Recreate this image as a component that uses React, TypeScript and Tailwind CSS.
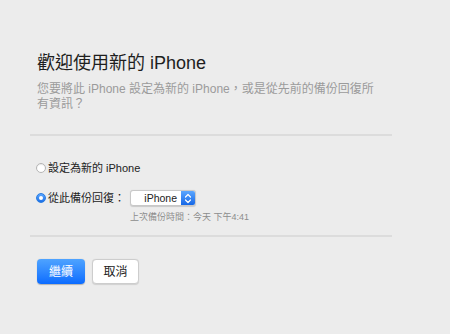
import React from "react";

const font = { fontFamily: '"Liberation Sans", "Noto Sans CJK TC", sans-serif' };

function Radio({ checked }: { checked: boolean }) {
  if (checked) {
    return (
      <span className="flex h-[10px] w-[10px] shrink-0 items-center justify-center rounded-full border border-[#2a7de1] bg-gradient-to-b from-[#5aa6ff] to-[#1a6fe8]">
        <span className="h-[4px] w-[4px] rounded-full bg-white" />
      </span>
    );
  }
  return (
    <span className="h-[10px] w-[10px] shrink-0 rounded-full border border-[#b5b5b5] bg-white shadow-[inset_0_1px_1px_rgba(0,0,0,0.08)]" />
  );
}

function PopupButton() {
  return (
    <div className="flex h-[16px] w-[66px] overflow-hidden rounded-[3px] border border-[#c8c8c8] bg-white shadow-[0_0.5px_1px_rgba(0,0,0,0.15)]">
      <div className="flex flex-1 items-center justify-end pr-[4px] text-[10.5px] leading-none text-[#222]">
        iPhone
      </div>
      <div className="flex w-[14px] flex-col items-center justify-center bg-gradient-to-b from-[#5aa6ff] to-[#1467e6]">
        <svg width="8" height="11" viewBox="0 0 8 11" fill="none">
          <path d="M1.5 4 L4 1.5 L6.5 4" stroke="white" strokeWidth="1.2" strokeLinecap="round" strokeLinejoin="round" />
          <path d="M1.5 7 L4 9.5 L6.5 7" stroke="white" strokeWidth="1.2" strokeLinecap="round" strokeLinejoin="round" />
        </svg>
      </div>
    </div>
  );
}

export default function App() {
  return (
    <div className="h-[334px] w-[450px] overflow-hidden bg-[#ececec] pl-[30px] pt-[52px]" style={font}>
      <div className="w-[362px]">
        <h1 className="pl-[7px] text-[18px] leading-[22px] text-[#1e1e1e]">歡迎使用新的 iPhone</h1>
        <p className="mt-[8px] pl-[7px] text-[12px] leading-[15px] text-[#9b9b9b]">
          您要將此 iPhone 設定為新的 iPhone，或是從先前的備份回復所
          <br />
          有資訊？
        </p>

        <div className="mt-[22px] h-[2px] bg-[#dcdcdc]" />

        <div className="mt-[24px] flex h-[16px] items-center gap-[2px] pl-[6px] text-[11px] text-[#222]">
          <Radio checked={false} />
          <span>設定為新的 iPhone</span>
        </div>

        <div className="mt-[14px] flex h-[16px] items-center pl-[6px] text-[11px] text-[#222]">
          <Radio checked />
          <span className="ml-[2px] w-[82px]">從此備份回復：</span>
          <PopupButton />
        </div>

        <div className="mt-[5px] pl-[100px] text-[9px] leading-[12px] text-[#8c8c8c]">上次備份時間：今天 下午4:41</div>

        <div className="mt-[12px] h-[2px] bg-[#dcdcdc]" />

        <div className="mt-[22px] flex gap-[7px] pl-[7px]">
          <button className="flex h-[25px] w-[48px] items-center justify-center rounded-[4px] bg-gradient-to-b from-[#4ea3ff] to-[#0a6bff] text-[12px] text-white shadow-[0_0.5px_1px_rgba(0,0,0,0.25)]">
            繼續
          </button>
          <button className="flex h-[25px] w-[47px] items-center justify-center rounded-[4px] border border-[#cdcdcd] bg-white text-[12px] text-[#222] shadow-[0_0.5px_1px_rgba(0,0,0,0.12)]">
            取消
          </button>
        </div>
      </div>
    </div>
  );
}
